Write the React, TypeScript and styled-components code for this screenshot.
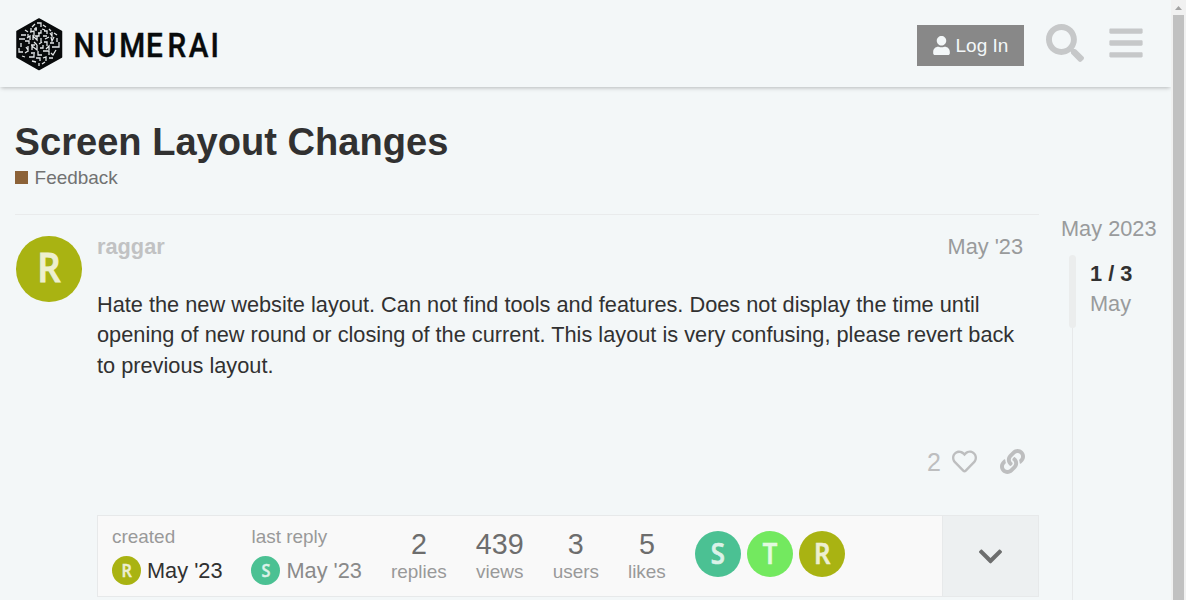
import React from "react";
import styled, { createGlobalStyle } from "styled-components";
import { FaUser, FaSearch, FaBars, FaRegHeart, FaLink, FaChevronDown } from "react-icons/fa";

const GlobalStyle = createGlobalStyle`
  * { box-sizing: border-box; }
  body {
    margin: 0;
    background: #f3f7f8;
    color: #313131;
    font: 21.76px/1.4 "Liberation Sans", Arial, sans-serif;
    overflow: hidden;
  }
  button { font: inherit; border: 0; background: none; padding: 0; }
  svg { display: block; flex: none; }
`;

const Window = styled.div`
  display: flex;
  height: 600px;
  overflow: hidden;
`;

const Page = styled.div`
  flex: 1;
  min-width: 0;
  overflow: hidden;
`;

const Header = styled.header`
  height: 87px;
  display: flex;
  align-items: flex-start;
  justify-content: space-between;
  padding: 0 26px 0 15px;
  box-shadow: 0 2px 4px -1px rgba(0, 0, 0, 0.25);
`;

const HeaderActions = styled.div`
  display: flex;
  align-items: flex-start;
`;

const LoginButton = styled.button`
  display: flex;
  align-items: center;
  gap: 4.5px;
  width: 107px;
  height: 41px;
  margin-top: 25px;
  padding-left: 15px;
  background: #888;
  color: #f3f7f8;
  font-size: 19px;
`;

const LoginText = styled.span`
  padding-top: 1px;
`;

const IconButton = styled.button<{ $left: number; $top: number; $color?: string }>`
  display: block;
  margin-left: ${(p) => p.$left}px;
  margin-top: ${(p) => p.$top}px;
  color: ${(p) => p.$color || "#c6c8c9"};
`;

const TitleArea = styled.div`
  height: 127px;
  padding: 28px 15px 0 14.6px;
`;

const Title = styled.h1`
  margin: 0;
  font-size: 38.1px;
  line-height: 54px;
  height: 52px;
`;

const Category = styled.a`
  display: flex;
  align-items: center;
  gap: 7px;
  font-size: 18.94px;
  line-height: 22px;
  color: #717272;
`;

const CategoryBadge = styled.span`
  width: 13px;
  height: 13px;
  margin-bottom: 1px;
  background: #8c6238;
`;

const Columns = styled.div`
  display: flex;
  padding-left: 15px;
`;

const Post = styled.article`
  width: 1024px;
  display: flex;
  border-top: 1px solid #e9ebec;
  padding: 21px 0 0 1px;
`;

const Avatar = styled.span<{ $size: number; $color: string }>`
  display: flex;
  align-items: center;
  justify-content: center;
  flex: none;
  width: ${(p) => p.$size}px;
  height: ${(p) => p.$size}px;
  border-radius: 50%;
  background: ${(p) => p.$color};
  color: #fff;
  font: 600 ${(p) => p.$size * 0.62}px/1 "Open Sans", sans-serif;
`;

const Letter = styled.span`
  margin-bottom: 0.06em;
  transform: scaleX(0.9);
  opacity: 0.8;
  -webkit-text-stroke: 0.025em #fff;
`;

const PostBody = styled.div`
  flex: 1;
  margin-left: 15.5px;
`;

const PostMeta = styled.div`
  display: flex;
  justify-content: space-between;
  height: 54px;
  padding: 0 16px 0 0;
  line-height: 22px;
  color: #999b9c;
`;

const Username = styled.span`
  font-weight: 700;
  color: #c1c2c3;
`;

const Cooked = styled.p`
  margin: 0;
  height: 155px;
  padding-right: 16px;
  line-height: 30.46px;
`;

const PostControls = styled.div`
  display: flex;
  align-items: flex-start;
  height: 70px;
  padding-right: 14px;
  justify-content: flex-end;
  color: #bdbebf;
`;

const LikeCount = styled.span`
  font-size: 25px;
  line-height: 34px;
`;

const TopicMap = styled.section`
  display: flex;
  height: 82px;
  border: 1px solid #e7e9ea;
  background: #f9f9f9;
`;

const MapItems = styled.ul`
  flex: 1;
  display: flex;
  margin: 0;
  padding: 9px 0 0 14px;
  list-style: none;
`;

const MapItem = styled.li<{ $centered?: boolean }>`
  margin-right: 29px;
  text-align: ${(p) => (p.$centered ? "center" : "left")};
`;

const Label = styled.div`
  font-size: 18.94px;
  line-height: 24px;
  color: #999;
`;

const DateLine = styled.div<{ $color: string }>`
  display: flex;
  align-items: center;
  gap: 6px;
  margin-top: 7px;
  line-height: 29px;
  color: ${(p) => p.$color};
`;

const Count = styled.div`
  padding-top: 2px;
  font-size: 28.7px;
  line-height: 35px;
  height: 35px;
  color: #6d6d6d;
`;

const Participants = styled.li`
  display: flex;
  gap: 6px;
  margin-top: 6px;
`;

const Expand = styled.button`
  display: flex;
  align-items: center;
  justify-content: center;
  width: 96px;
  border-left: 1px solid #e7e9ea;
  background: #edf0f1;
  color: #6d6e6e;
`;

const Timeline = styled.aside`
  margin-left: 22px;
  white-space: nowrap;
  color: #999b9c;
`;

const TimelineStart = styled.div`
  height: 41px;
  line-height: 30px;
`;

const TimelineTrack = styled.div`
  display: flex;
  margin-left: 8px;
  gap: 14px;
`;

const Rail = styled.div`
  display: flex;
  flex-direction: column;
  align-items: center;
  width: 7px;
  height: 345px;
`;

const Handle = styled.div`
  width: 7px;
  height: 73px;
  flex: none;
  border-radius: 3.5px;
  background: #ebeded;
`;

const RailLine = styled.div`
  width: 1px;
  flex: 1;
  background: #e7e9ea;
`;

const TimelineLabels = styled.div`
  padding-top: 4px;
  line-height: 30px;
`;

const Position = styled.div`
  font-weight: 700;
  color: #313131;
`;

const Scrollbar = styled.div`
  width: 15px;
  flex: none;
  padding: 0 2px;
  background: #f1f1f1;
`;

const ScrollArrow = styled.svg`
  width: 11px;
  height: 15px;
`;

const ScrollThumb = styled.div`
  height: 585px;
  background: #c1c1c1;
`;

const COLORS: Record<string, string> = { R: "#a9b312", S: "#4bc193", T: "#73e95f" };

const LETTER_X = "81.6 107.6 132.6 162.2 186 209.6 233.8";

function Logo() {
  return (
    <svg width="205" height="87" viewBox="15 0 205 87">
      <path d="M39 19L61.5 31.5V57L39 69.5L17 57V31.5Z" fill="#080b0c" stroke="#080b0c" strokeWidth="1.5" strokeLinejoin="round" />
      <path
        fill="none"
        stroke="#e4e8e9"
        strokeWidth="1.3"
        d="M37 23h4v4M35 24l-3 3M43 25l3 2M31 28v3M36 27v4M34 29h3M42 29l3 1M25 30l3 2M30 32l4-1v5M38 33h3v-3M44 31h3v3M49 29l2 2M21 35h5M28 34v3M35 36h4v-3M43 36h4M50 33l2 3v-4M54 33l3 2M19 39h6M27 38l3-2v4M33 40v-4l4 4v-4M41 38v4M45 39l4-2M51 37l1 4 2-4M57 38v4M21 43v4M25 41h4v3M31 45h4M34 42l3 3M39 44l3-2M44 42h3v4M50 43h4M59 42v5h-3M19 48v4h4M26 47l2 3v-4M32 50v-4l5 4v-5M40 48h3v-3M46 49l3-3v4M52 47h4M25 53l3-2M31 53h4M38 51v4h4M43 51h6v4M51 53l2 2 3-5M22 56l3 1M29 57h5v-3M36 58h4v3M43 58l3-1v4M49 58h4M32 61l4 1M39 63v3M42 64l3-2"
      />
      <text
        transform="scale(0.9 1)"
        x={LETTER_X}
        y="57"
        fill="#080b0c"
        fontFamily="Roboto, sans-serif"
        fontWeight="500"
        fontSize="33"
        stroke="#080b0c"
        strokeWidth="0.4"
      >
        NUMERAI
      </text>
    </svg>
  );
}

function LetterAvatar({ size, letter }: { size: number; letter: string }) {
  return (
    <Avatar $size={size} $color={COLORS[letter]}>
      <Letter>{letter}</Letter>
    </Avatar>
  );
}

function DateItem({ label, letter, color }: { label: string; letter: string; color: string }) {
  return (
    <MapItem>
      <Label>{label}</Label>
      <DateLine $color={color}>
        <LetterAvatar size={29} letter={letter} />
        May '23
      </DateLine>
    </MapItem>
  );
}

function CountItem({ value, label }: { value: number; label: string }) {
  return (
    <MapItem $centered>
      <Count>{value}</Count>
      <Label>{label}</Label>
    </MapItem>
  );
}

export default function App() {
  return (
    <Window>
      <GlobalStyle />
      <Page>
        <Header>
          <Logo />
          <HeaderActions>
            <LoginButton>
              <FaUser size={19} />
              <LoginText>Log In</LoginText>
            </LoginButton>
            <IconButton $left={22} $top={24} aria-label="Search"><FaSearch size={38} /></IconButton>
            <IconButton $left={23} $top={24} aria-label="Menu"><FaBars size={38} /></IconButton>
          </HeaderActions>
        </Header>
        <TitleArea>
          <Title>Screen Layout Changes</Title>
          <Category><CategoryBadge />Feedback</Category>
        </TitleArea>
        <Columns>
          <Post>
            <LetterAvatar size={65.5} letter="R" />
            <PostBody>
              <PostMeta>
                <Username>raggar</Username>
                <span>May '23</span>
              </PostMeta>
              <Cooked>
                Hate the new website layout. Can not find tools and features. Does not display the time until opening of new
                round or closing of the current. This layout is very confusing, please revert back to previous layout.
              </Cooked>
              <PostControls>
                <LikeCount>2</LikeCount>
                <IconButton $left={11} $top={4} $color="#bdbebf" aria-label="Like"><FaRegHeart size={25} /></IconButton>
                <IconButton $left={23} $top={4} $color="#bdbebf" aria-label="Share"><FaLink size={25} /></IconButton>
              </PostControls>
              <TopicMap>
                <MapItems>
                  <DateItem label="created" letter="R" color="#313131" />
                  <DateItem label="last reply" letter="S" color="#8a8a8a" />
                  <CountItem value={2} label="replies" />
                  <CountItem value={439} label="views" />
                  <CountItem value={3} label="users" />
                  <CountItem value={5} label="likes" />
                  <Participants>
                    {["S", "T", "R"].map((l) => (
                      <LetterAvatar key={l} size={46} letter={l} />
                    ))}
                  </Participants>
                </MapItems>
                <Expand aria-label="Expand"><FaChevronDown size={27} /></Expand>
              </TopicMap>
            </PostBody>
          </Post>
          <Timeline>
            <TimelineStart>May 2023</TimelineStart>
            <TimelineTrack>
              <Rail><Handle /><RailLine /></Rail>
              <TimelineLabels>
                <Position>1 / 3</Position>
                <div>May</div>
              </TimelineLabels>
            </TimelineTrack>
          </Timeline>
        </Columns>
      </Page>
      <Scrollbar>
        <ScrollArrow viewBox="0 0 11 15"><path d="M2 10L5.5 6L9 10Z" fill="#a3a3a3" /></ScrollArrow>
        <ScrollThumb />
      </Scrollbar>
    </Window>
  );
}
